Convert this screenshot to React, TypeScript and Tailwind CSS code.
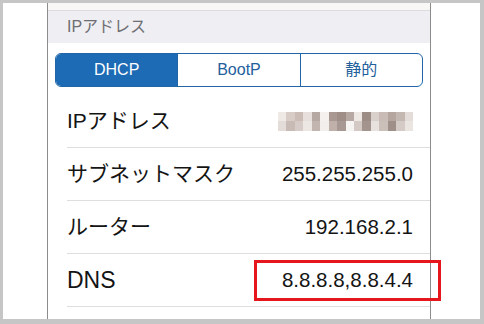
import React from "react";

const FONT = { fontFamily: '"Liberation Sans", "Noto Sans CJK JP", sans-serif' };

const mosaic: string[][] = [
  ["#efe9e6", "#d8ccc7", "#cbbdb6", "#e6dfdb", "#b5a7a1", "#f4f1ef", "#a99892", "#9f8d87", "#b6a8a2", "#eee8e5", "#9c8c86", "#d9d0cb", "#c9bcb6", "#b5a6a0", "#c4b8b2", "#e3dcd8"],
  ["#e4dcd8", "#c8bab4", "#d6cbc6", "#ede7e4", "#c2b4ae", "#f2eeec", "#bfb0aa", "#a89893", "#f6f4f3", "#d4c9c4", "#a4948e", "#e8e2df", "#cbbfb9", "#9e8f89", "#d5cbc6", "#ebe5e2"],
];

function Row({ label, value, labelClass, children }: { label: string; value?: string; labelClass?: string; children?: React.ReactNode }) {
  return (
    <div className="ml-[19px] h-[53px] shrink-0 border-b border-[#dedede] flex items-center justify-between pr-[17px]">
      <span className={labelClass ?? "text-[21px] text-[#141414]"}>{label}</span>
      {value ? <span className="text-[20.5px] text-[#141414]">{value}</span> : children}
    </div>
  );
}

export default function App() {
  return (
    <div className="relative w-[484px] h-[324px] bg-[#c6c6c6] pt-[3px] pl-[3px] pr-[4px] pb-[5px] overflow-hidden" style={FONT}>
      <div className="flex h-full bg-white overflow-hidden">
        <div className="w-[45px] bg-white border-r border-[#8c8c8c]" />
        <div className="w-[383px] flex flex-col bg-white border-r border-[#8c8c8c] overflow-hidden">
          <div className="h-[8px] bg-[#f8f7f6] border-b border-[#dcdcdc] shrink-0" />
          <div className="h-[32px] bg-[#efeff3] flex items-center pl-[19px] shrink-0">
            <span className="text-[16px] text-[#6e6e72]">IPアドレス</span>
          </div>
          <div className="pt-[10px] px-[7px] shrink-0">
            <div className="flex h-[34px] rounded-[6px] border border-[#2266a8] overflow-hidden">
              <div className="flex-1 bg-[#1c6bb4] text-white flex items-center justify-center text-[16px]">DHCP</div>
              <div className="flex-1 border-l border-[#2266a8] text-[#24609c] flex items-center justify-center text-[16px]">BootP</div>
              <div className="flex-1 border-l border-[#2266a8] text-[#24609c] flex items-center justify-center text-[16px]">静的</div>
            </div>
          </div>
          <div className="h-[8px] shrink-0" />
          <Row label="IPアドレス">
            <div className="flex flex-col w-[135px]">
              {mosaic.map((r, i) => (
                <div key={i} className="flex h-[9.5px]">
                  {r.map((c, j) => (
                    <div key={j} className="flex-1" style={{ backgroundColor: c }} />
                  ))}
                </div>
              ))}
            </div>
          </Row>
          <Row label="サブネットマスク" value="255.255.255.0" />
          <Row label="ルーター" value="192.168.2.1" />
          <Row label="DNS" value="8.8.8.8,8.8.4.4" labelClass="text-[23px] text-[#141414]" />
          <div className="ml-[19px] pt-[9px] text-[18px] text-[#c4c4c4] shrink-0">検索ドメイン</div>
        </div>
        <div className="flex-1 bg-white" />
      </div>
      <div className="absolute left-[254px] top-[260px] w-[187px] h-[41px] border-[3px] border-[#e5161c]" />
    </div>
  );
}
